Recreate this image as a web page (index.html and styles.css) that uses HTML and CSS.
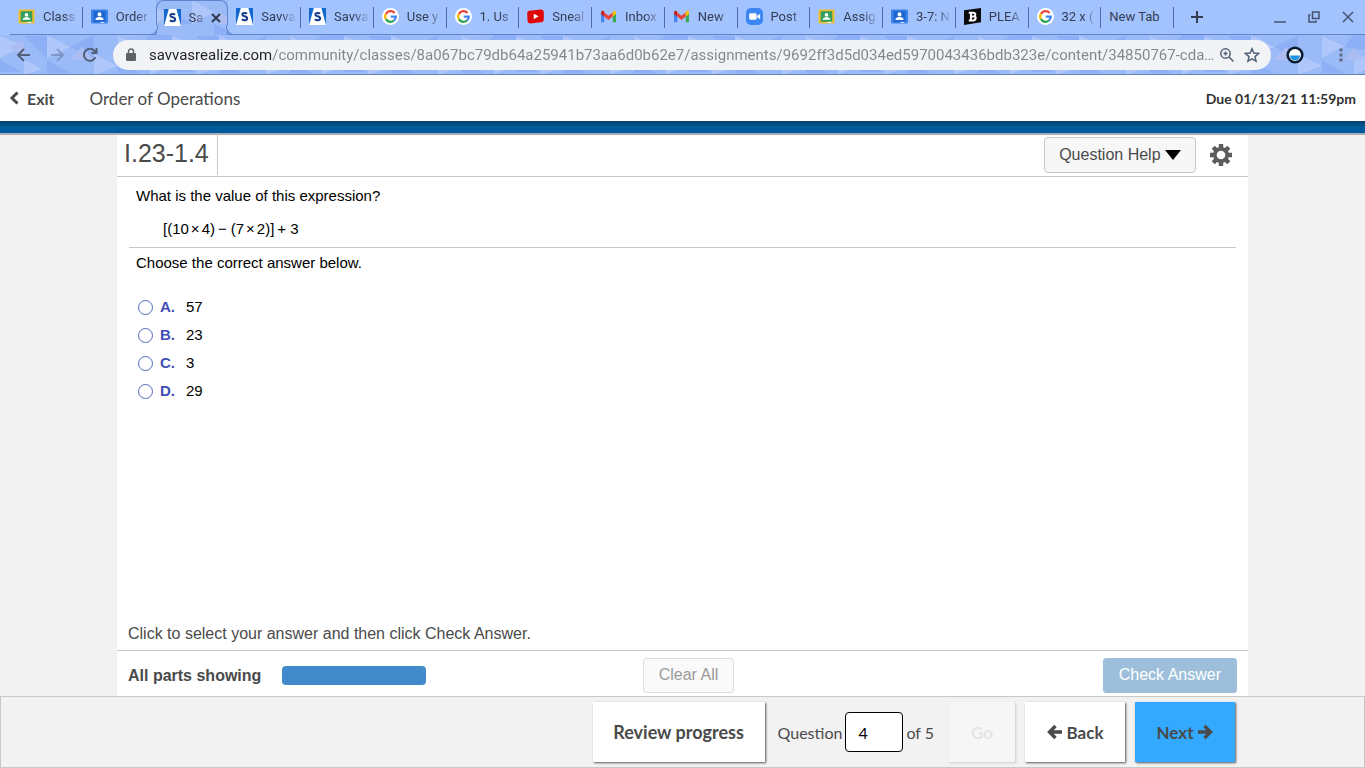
FILE: index.html
```html
<!DOCTYPE html>
<html lang="en">
<head>
    <meta charset="UTF-8">
    <meta name="viewport" content="width=device-width, initial-scale=1.0">
    <title>Order of Operations</title>
    <link rel="stylesheet" href="styles.css">
</head>
<body>
<!-- Shared icons -->
<svg class="defs" width="0" height="0" aria-hidden="true">
    <symbol id="i-class" viewBox="0 0 16 16">
        <rect x=".5" y="1.500" width="15" height="13" rx="1" fill="#f2bd2c"/>
        <rect x="2.500" y="3" width="11" height="10" fill="#32a05a"/>
        <circle cx="8" cy="6.500" r="1.700" fill="#fff"/>
        <path d="M4.500 11V10.300C4.500 9 6.500 8.600 8 8.600s3.500.4 3.500 1.700V11z" fill="#fff"/>
        <path d="M9 13h3.500v1H9z" fill="#fff"/>
    </symbol>
    <symbol id="i-people" viewBox="0 0 16 16">
        <rect x="0" y="1.500" width="16" height="13" rx="1" fill="#3b83ea"/>
        <rect x="2.500" y="3" width="11" height="10" fill="#1c64cf"/>
        <circle cx="8" cy="6" r="1.900" fill="#fff"/>
        <path d="M4.300 11.200v-.8c0-1.400 2.200-1.900 3.700-1.900s3.700.5 3.700 1.900v.8z" fill="#fff"/>
        <path d="M9 13h3.500v1H9z" fill="#dce9ff"/>
    </symbol>
    <symbol id="i-savvas" viewBox="0 0 16 16">
        <path d="M0 0h16v16H0z" fill="#1268cf"/>
        <path d="M4.500 0h7.200L16 16H0z" fill="#fff"/>
        <path d="M10.300 5.400C9.500 4.500 6 4.300 6 6.300s4.500 1.100 4.500 3.400-3.600 2.200-4.900.9" fill="none" stroke="#173b8c" stroke-width="1.900"/>
    </symbol>
    <symbol id="i-google" viewBox="0 0 16 16">
        <circle cx="8" cy="8" r="8" fill="#fff"/>
        <g fill="none" stroke-width="2.200">
            <path d="M11.800 4.700A5 5 0 0 0 3.700 5.500" stroke="#ea4335"/>
            <path d="M3.700 5.500a5 5 0 0 0 0 5" stroke="#fbbc05"/>
            <path d="M3.700 10.500a5 5 0 0 0 7.500 1.400" stroke="#34a853"/>
            <path d="M11.200 11.900A5 5 0 0 0 13 8.100H8.200" stroke="#4285f4"/>
        </g>
    </symbol>
    <symbol id="i-youtube" viewBox="0 0 16 16">
        <path d="M2 2.500 13 1.500Q15.600 1.400 15.800 4v6.500q0 2.700-2.600 3L3.300 14.500Q.8 14.500.5 12L.2 5Q.1 2.800 2 2.500z" fill="#e00707"/>
        <path d="M6.300 5.300v5.200l4.700-2.700z" fill="#fff"/>
    </symbol>
    <symbol id="i-gmail" viewBox="0 0 16 16">
        <path d="M1 4v9.500h3V6z" fill="#4285f4"/>
        <path d="M15 4v9.500h-3V6z" fill="#34a853"/>
        <path d="M4 4.200 8 7.300l4-3.100v3.900l-4 3.100-4-3.100z" fill="#ea4335"/>
        <path d="M1 4.500C1 2.500 2.800 2.200 4 3.200v4.900L1 5.800z" fill="#c5221f"/>
        <path d="M15 4.500c0-2-1.800-2.300-3-1.300v4.900l3-2.300z" fill="#fbbc04"/>
    </symbol>
    <symbol id="i-zoom" viewBox="0 0 16 16">
        <rect width="16" height="16" rx="4.500" fill="#3b86f2"/>
        <rect x="3" y="5" width="7" height="6" rx="1.400" fill="#fff"/>
        <path d="m10.500 7.200 2.800-1.900v5.400l-2.800-1.900z" fill="#fff"/>
    </symbol>
    <symbol id="i-bold" viewBox="0 0 16 16">
        <path d="M0 2 16 0v13.500L0 16z" fill="#0a0a0a"/>
        <path d="M4.500 4.500h4c3 0 2.500 3 .9 3.300 2.200.3 2.200 3.900-.9 3.900h-4M6.500 4.500v7M6.500 8h3" fill="none" stroke="#fff" stroke-width="1.900"/>
    </symbol>
    <symbol id="i-arrow" viewBox="0 0 16 16">
        <path d="M8.500 2 2.500 8l6 6M3 8h12" fill="none" stroke="currentColor" stroke-width="3.400"/>
    </symbol>
</svg>

<header class="browser">
    <svg class="theme" width="100%" height="100%" aria-hidden="true">
        <defs>
            <pattern id="tri" width="172" height="75" patternUnits="userSpaceOnUse">
                <rect width="172" height="75" fill="#9bbaf8"/>
                <path d="M0 36 24 46 0 58zM47 35 70 47 47 58zM24 59 42 69 24 75zM94 54l24 12-24 9zM118 36l22 10-22 12zM150 52l22 12-22 11zM70 0l24 12-24 12zM20 0l22 12-22 12zM150 5l22 10-22 12z" fill="#b0c7fc"/>
                <path d="M24 36h23v22zM0 60l22 12H0zM70 47l24-12v24zM47 60l23 13H47zM140 47l10-12h22v17zM118 60l22 13h-22zM0 12l20 12H0zM94 12l24-12v24zM42 24l24 11H42z" fill="#8caff5"/>
                <path d="M10 47 24 40v18zM70 60l12-13 12 13zM118 24l22 12h-22zM140 60l10-12 10 12zM47 12l23 12H47z" fill="#acbdf3"/>
            </pattern>
        </defs>
        <rect width="100%" height="100%" fill="url(#tri)"/>
    </svg>

    <div class="strip">
        <nav class="tabs" aria-label="Tabs">
            <a class="tab" href="#"><svg class="fav"><use href="#i-class"/></svg><span>Class</span></a>
            <a class="tab tab-before" href="#"><svg class="fav"><use href="#i-people"/></svg><span>Order</span></a>
            <div class="tab active"><svg class="fav"><use href="#i-savvas"/></svg><span>Sa</span>
                <button class="close" aria-label="Close tab"><svg width="10" height="10" viewBox="0 0 10 10"><path d="m1 1 8 8M9 1 1 9"/></svg></button>
            </div>
            <a class="tab" href="#"><svg class="fav"><use href="#i-savvas"/></svg><span>Savva</span></a>
            <a class="tab" href="#"><svg class="fav"><use href="#i-savvas"/></svg><span>Savva</span></a>
            <a class="tab" href="#"><svg class="fav"><use href="#i-google"/></svg><span>Use y</span></a>
            <a class="tab" href="#"><svg class="fav"><use href="#i-google"/></svg><span>1. Us</span></a>
            <a class="tab" href="#"><svg class="fav"><use href="#i-youtube"/></svg><span>Sneal</span></a>
            <a class="tab" href="#"><svg class="fav"><use href="#i-gmail"/></svg><span>Inbox</span></a>
            <a class="tab" href="#"><svg class="fav"><use href="#i-gmail"/></svg><span>New</span></a>
            <a class="tab" href="#"><svg class="fav"><use href="#i-zoom"/></svg><span>Post</span></a>
            <a class="tab" href="#"><svg class="fav"><use href="#i-class"/></svg><span>Assig</span></a>
            <a class="tab" href="#"><svg class="fav"><use href="#i-people"/></svg><span>3-7: N</span></a>
            <a class="tab" href="#"><svg class="fav"><use href="#i-bold"/></svg><span>PLEA</span></a>
            <a class="tab" href="#"><svg class="fav"><use href="#i-google"/></svg><span>32 x (</span></a>
            <a class="tab plain" href="#"><span>New Tab</span></a>
        </nav>
        <div class="window-tools">
            <button class="new-tab" aria-label="New tab"><svg width="14" height="14" viewBox="0 0 14 14"><path d="M7 1v12M1 7h12"/></svg></button>
            <button aria-label="Minimize"><svg width="14" height="14" viewBox="0 0 14 14"><path d="M1 12h12"/></svg></button>
            <button aria-label="Restore"><svg width="14" height="14" viewBox="0 0 14 14"><path d="M5.500 2H12v6.500H5.500zM3.500 5H2v7h7v-1.500"/></svg></button>
            <button aria-label="Close"><svg width="14" height="14" viewBox="0 0 14 14"><path d="m2 2 10 10M12 2 2 12"/></svg></button>
        </div>
    </div>

    <div class="toolbar">
        <button aria-label="Back"><svg width="16" height="16" viewBox="0 0 16 16"><path d="M8 2 2 8l6 6M2 8h12"/></svg></button>
        <button class="off" aria-label="Forward"><svg width="16" height="16" viewBox="0 0 16 16"><path d="m8 2 6 6-6 6M14 8H2"/></svg></button>
        <button aria-label="Reload"><svg width="16" height="16" viewBox="0 0 16 16"><path d="M13.500 10A6 6 0 1 1 12.300 3.700L14 5.500M14.500 1v5H9.500"/></svg></button>
        <div class="address">
            <svg class="lock" width="10" height="14" viewBox="0 0 10 14"><path d="M1 5h8q1 0 1 1v6q0 1-1 1H1q-1 0-1-1V6q0-1 1-1z"/><path d="M2.500 5V3.500a2.500 2.500 0 0 1 5 0V5"/></svg>
            <input class="url" type="text" aria-label="Address" value="savvasrealize.com/community/classes/8a067bc79db64a25941b73aa6d0b62e7/assignments/9692ff3d5d034ed5970043436bdb323e/content/34850767-cda…">
            <button aria-label="Zoom"><svg width="16" height="16" viewBox="0 0 16 16"><circle cx="6.500" cy="6.500" r="4.700"/><path d="m10 10 4.500 4.500M4.500 6.500h4M6.500 4.500v4"/></svg></button>
            <button class="star" aria-label="Bookmark"><svg width="16" height="16" viewBox="0 0 16 16"><path d="m8 1.800 1.800 4.300 4.700.4L11 9.600l1.100 4.600L8 11.800l-4.100 2.400L5 9.600 1.500 6.500l4.700-.4z"/></svg></button>
        </div>
        <button class="extension" aria-label="Extension"><svg width="18" height="18" viewBox="0 0 18 18"><circle cx="9" cy="9" r="7.300"/><path d="M4 9.500h10a5 5 0 0 1-10 0z"/></svg></button>
        <button class="menu" aria-label="Menu"><svg width="4" height="16" viewBox="0 0 4 16"><path d="M.5 1.500h3v3h-3zM.5 6.500h3v3h-3zM.5 11.500h3v3h-3z"/></svg></button>
    </div>
</header>

<div class="lesson-bar">
    <a class="exit" href="#"><svg width="10" height="14" viewBox="0 0 10 14"><path d="M8.500 1.500 3 7l5.500 5.500" fill="none" stroke="currentColor" stroke-width="3"/></svg>Exit</a>
    <h1>Order of Operations</h1>
    <p class="due">Due 01/13/21 11:59pm</p>
</div>
<div class="blue-band"></div>

<main class="panel">
    <div class="panel-head">
        <h2>I.23-1.4</h2>
        <button class="help">Question Help <svg width="16" height="10" viewBox="0 0 16 10"><path d="M0 0h16L8 10z"/></svg></button>
        <button class="settings" aria-label="Settings"><svg width="22" height="22" viewBox="0 0 22 22"><g stroke="#5c5c5c" stroke-width="4.400"><path d="M11 0v22M0 11h22M3.200 3.200l15.600 15.600M18.800 3.200 3.200 18.800"/></g><circle cx="11" cy="11" r="8" fill="#5c5c5c"/><circle cx="11" cy="11" r="4.300" fill="#fff"/></svg></button>
    </div>

    <div class="question">
        <p class="prompt">What is the value of this expression?</p>
        <p class="expression">[(10<i>×</i>4)<b>−</b>(7<i>×</i>2)]<b>+</b>3</p>
    </div>
    <form class="answers" action="#">
        <p class="prompt">Choose the correct answer below.</p>
        <div class="choices">
            <label><input type="radio" name="answer" value="57"><b>A.</b>57</label>
            <label><input type="radio" name="answer" value="23"><b>B.</b>23</label>
            <label><input type="radio" name="answer" value="3"><b>C.</b>3</label>
            <label><input type="radio" name="answer" value="29"><b>D.</b>29</label>
        </div>
    </form>
    <p class="hint">Click to select your answer and then click Check Answer.</p>

    <div class="panel-foot">
        <div class="parts"><strong>All parts showing</strong><span class="progress"></span></div>
        <button class="clear">Clear All</button>
        <button class="check">Check Answer</button>
    </div>
</main>

<footer class="pager">
    <button class="review">Review progress</button>
    <div class="jump">
        <label for="question">Question</label>
        <input type="text" id="question" value="4">
        <span>of 5</span>
    </div>
    <button class="go">Go</button>
    <button class="back"><svg width="16" height="16"><use href="#i-arrow"/></svg>Back</button>
    <button class="next">Next<svg class="flip" width="16" height="16"><use href="#i-arrow"/></svg></button>
</footer>
</body>
</html>
```
FILE: styles.css
```css
* {
    box-sizing: border-box;
}

body {
    margin: 0;
    min-height: 100vh;
    display: flex;
    flex-direction: column;
    background-color: #f2f2f2;
    color: #4a4a4a;
    font-family: "Liberation Sans", Arial, sans-serif;
    font-size: 16px;
}

h1, h2, p {
    margin: 0;
    font-weight: normal;
}

button {
    padding: 0;
    border: 0;
    background: none;
    color: inherit;
    font: inherit;
    cursor: pointer;
}

a {
    color: inherit;
    text-decoration: none;
}

.defs {
    position: absolute;
}

/* Browser */
.browser {
    position: relative;
    border-bottom: 1px solid #6883b8;
    font-family: Roboto, sans-serif;
}

.browser svg {
    display: block;
}

.theme {
    position: absolute;
    inset: 0;
}

.strip {
    position: relative;
    display: flex;
    height: 35px;
}

.tabs {
    display: flex;
    flex: 1;
    min-width: 0;
    padding-left: 10px;
    background: linear-gradient(#a3c3ff, #a3c3ff) left / 10px 100% no-repeat;
}

.tab {
    position: relative;
    display: flex;
    flex: 1 1 0;
    align-items: center;
    gap: 8px;
    min-width: 0;
    padding: 0 2px 1px 8px;
    background-color: #a3c3ff;
    border-bottom: 1px solid #5f83cc;
    color: #333d52;
    font-size: 13px;
    white-space: nowrap;
}

.tab::after {
    content: "";
    position: absolute;
    right: 0;
    top: 7px;
    width: 1px;
    height: 21px;
    background-color: #4f6ea9;
}

/* long titles fade out */
.tab span {
    flex: 1;
    -webkit-mask-image: linear-gradient(to right, #000 20px, transparent 36px);
    mask-image: linear-gradient(to right, #000 20px, transparent 36px);
}

.tab.plain span {
    -webkit-mask-image: none;
    mask-image: none;
}

.fav {
    flex: none;
    width: 17px;
    height: 17px;
}

.tab-before::after {
    display: none;
}

.tab.active {
    z-index: 1;
    padding: 0 1px 1px 7px;
    background: none;
    border: 1px solid #5f83cc;
    border-bottom: 0;
    border-radius: 8px 8px 0 0;
}

.tab.active span {
    -webkit-mask-image: linear-gradient(to right, #000 6px, transparent 18px);
    mask-image: linear-gradient(to right, #000 6px, transparent 18px);
}

.tab.active::before,
.tab.active::after {
    content: "";
    position: absolute;
    top: auto;
    bottom: 0;
    width: 8px;
    height: 9px;
    background-color: #a3c3ff;
    border-bottom: 1px solid #5f83cc;
}

.tab.active::before {
    left: -8px;
    border-right: 1px solid #5f83cc;
    border-bottom-right-radius: 8px;
}

.tab.active::after {
    right: -8px;
    border-left: 1px solid #5f83cc;
    border-bottom-left-radius: 8px;
}

.close {
    margin-right: 9px;
}

.close path {
    fill: none;
    stroke: #333d52;
    stroke-width: 2;
}

.window-tools {
    display: flex;
    align-items: center;
    justify-content: flex-end;
    gap: 20px;
    width: 191px;
    padding-right: 10px;
    background-color: #a3c3ff;
    border-bottom: 1px solid #5f83cc;
}

.window-tools path {
    fill: none;
    stroke: #46536e;
    stroke-width: 1.5;
}

.window-tools .new-tab {
    margin-right: auto;
    margin-left: 16px;
}

.window-tools .new-tab path {
    stroke: #333d52;
    stroke-width: 2;
}

.toolbar {
    position: relative;
    display: flex;
    align-items: center;
    gap: 17px;
    height: 39px;
    padding: 0 22px 0 16px;
}

.toolbar path,
.toolbar circle {
    fill: none;
    stroke: #53607a;
    stroke-width: 2;
}

.toolbar .off {
    opacity: 0.4;
}

.address {
    display: flex;
    flex: 1;
    align-items: center;
    height: 30px;
    margin: 0 -2px;
    padding: 0 11px 0 13px;
    border-radius: 15px;
    background-color: #f1f3f4;
}

.address path,
.address circle {
    stroke-width: 1.5;
}

.toolbar .lock path {
    stroke: #5f6368;
}

.toolbar .lock path:first-child {
    fill: #5f6368;
    stroke: none;
}

.star {
    margin-left: 9px;
}

.url {
    flex: 1;
    min-width: 0;
    margin-left: 13px;
    padding: 0;
    border: 0;
    outline: 0;
    /* host in dark, path in grey */
    background: linear-gradient(to right, #202124 122px, #80868b 122px);
    -webkit-background-clip: text;
    background-clip: text;
    color: transparent;
    font: 15px Roboto, sans-serif;
}

.toolbar .extension circle {
    fill: #fff;
    stroke: #0b1c33;
    stroke-width: 2.6;
}

.toolbar .extension path {
    fill: #2196e3;
    stroke: none;
}

.toolbar .menu {
    margin-left: 18px;
}

.toolbar .menu path {
    fill: #5f6b85;
    stroke: none;
}

/* Lesson bar */
.lesson-bar {
    display: flex;
    align-items: center;
    height: 46px;
    padding: 0 9px;
    background-color: #fff;
    font-family: Lato, sans-serif;
}

.exit {
    display: flex;
    align-items: center;
    gap: 8px;
    font-weight: bold;
}

.lesson-bar h1 {
    margin-left: 35px;
    font-size: 17px;
}

.due {
    margin-left: auto;
    color: #333;
    font-size: 14px;
    font-weight: bold;
}

.blue-band {
    height: 14px;
    background: linear-gradient(#053d66, #005b9c 6px);
    border-bottom: 2px solid #a9aeb4;
}

/* Question panel */
.panel {
    display: flex;
    flex: 1;
    flex-direction: column;
    width: 100%;
    max-width: 1131px;
    margin: 0 auto;
    background-color: #fff;
}

.panel-head {
    display: flex;
    align-items: center;
    height: 42px;
    padding: 0 16px 2px 0;
    border-bottom: 1px solid #c8c8c8;
}

.panel-head h2 {
    height: 41px;
    padding: 0 8px 0 7px;
    border-right: 1px solid #c8c8c8;
    font-size: 25px;
    line-height: 38px;
}

.help {
    height: 36px;
    margin-left: auto;
    padding: 0 14px;
    border: 1px solid #c8c8c8;
    border-radius: 4px;
    background-color: #f7f7f7;
}

.settings {
    margin-left: 14px;
}

.settings svg {
    display: block;
}

.question,
.answers {
    color: #000;
    font-size: 15px;
    line-height: 20px;
}

.question {
    margin: 0 12px;
    padding: 9px 7px 8px;
    border-bottom: 1px solid #c8c8c8;
}

.expression {
    margin-top: 13px;
    padding-left: 27px;
}

.expression i,
.expression b {
    font-style: normal;
    font-weight: normal;
}

.expression i {
    margin: 0 2px;
}

.expression b {
    margin: 0 4px 0 3px;
}

.answers {
    flex: 1;
    padding: 5px 19px;
}

.choices {
    padding-top: 20px;
}

.choices label {
    display: flex;
    align-items: center;
    height: 28px;
}

.choices input {
    appearance: none;
    width: 15px;
    height: 15px;
    margin: 0 7px 0 2px;
    border: 1px solid #4f6dbd;
    border-radius: 50%;
}

.choices input:checked {
    background-color: #3f51b5;
}

.choices b {
    width: 26px;
    color: #3f4fb5;
}

.hint {
    padding: 0 11px 6px;
    line-height: 20px;
}

.panel-foot {
    display: grid;
    grid-template-columns: 1fr auto 1fr;
    align-items: center;
    padding: 7px 11px 3px;
    border-top: 1px solid #c8c8c8;
}

.parts {
    display: flex;
    align-items: center;
    gap: 21px;
}

.progress {
    width: 144px;
    height: 19px;
    border-radius: 4px;
    background-color: #428bca;
}

.clear,
.check {
    height: 35px;
    padding: 0 15px 2px;
    border: 1px solid #ddd;
    border-radius: 3px;
    background-color: #fafafa;
    color: #999;
}

.clear {
    margin-left: 12px;
}

.check {
    justify-self: end;
    border-color: #9dbfdb;
    background-color: #9dbfdb;
    color: #fff;
}

/* Pager */
.pager {
    display: flex;
    align-items: center;
    justify-content: flex-end;
    gap: 10px;
    height: 72px;
    padding-right: 129px;
    border: 1px solid #c8c8c8;
    font-family: Lato, sans-serif;
    font-size: 16px;
}

.pager button {
    display: flex;
    align-items: center;
    justify-content: center;
    gap: 4px;
    height: 60px;
    min-width: 100px;
    background-color: #fff;
    box-shadow: 1px 1px 2px #555;
    font-size: 17px;
    font-weight: bold;
}

.pager .review {
    min-width: 172px;
    font-size: 18px;
}

.pager .go {
    min-width: 66px;
    background-color: #f6f6f6;
    box-shadow: 1px 1px 2px #ccc;
    color: #e4e4e4;
}

.pager .next {
    background-color: #33a9ff;
}

.flip {
    transform: scaleX(-1);
}

.jump {
    display: flex;
    align-items: center;
    gap: 3px;
    margin: 0 5px 0 3px;
}

.jump input {
    width: 58px;
    height: 40px;
    padding: 0 12px;
    border: 1px solid #000;
    border-radius: 4px;
    color: #000;
    font: 16px Lato, sans-serif;
}
```
